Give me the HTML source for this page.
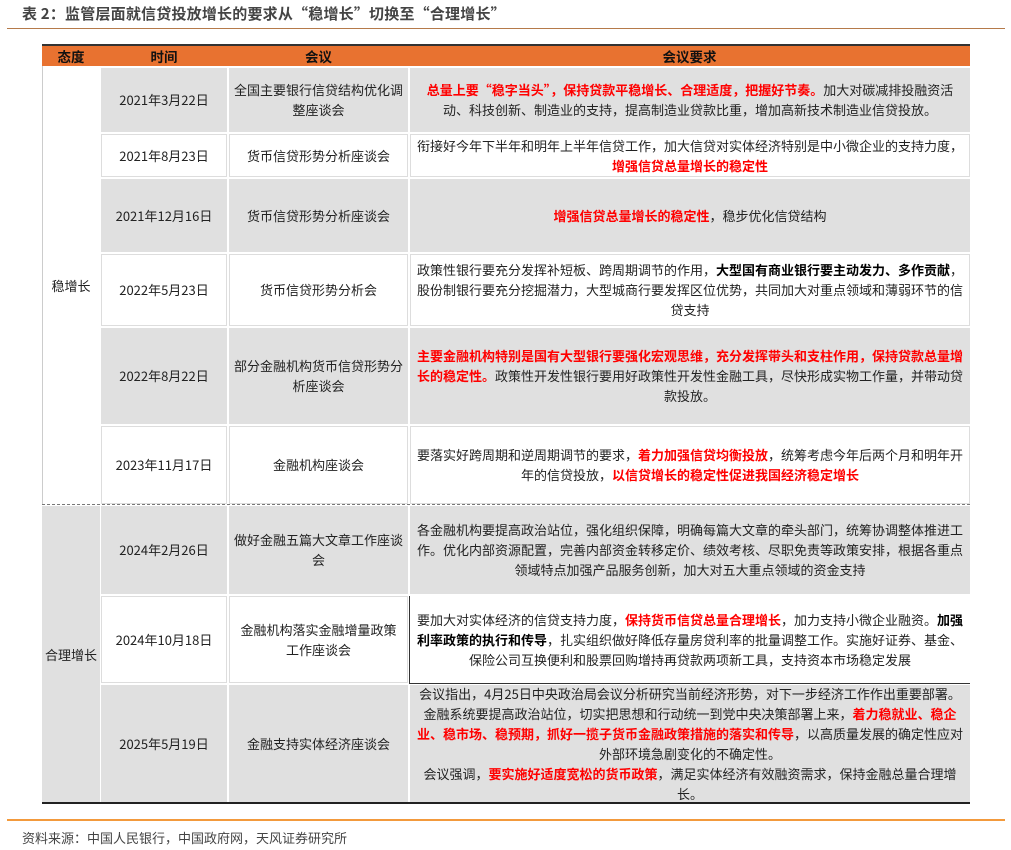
<!DOCTYPE html>
<html><head><meta charset="utf-8"><style>
*{margin:0;padding:0;box-sizing:border-box}
body{width:1011px;height:850px;background:#fff;position:relative;font-family:"Noto Sans CJK SC","Liberation Sans",sans-serif;color:#222;overflow:hidden}
.t{position:absolute;left:22px;top:3px;font-size:15px;line-height:22px;font-weight:bold;color:#444;letter-spacing:0.2px}
.hl{position:absolute;left:7px;top:28px;width:998px;height:1px;background:#b57a4a}
.c{position:absolute;display:flex;align-items:center;justify-content:center;text-align:center;font-size:13px;line-height:20px;padding:0 5px}
.g{background:#e0e0e0}
.w{background:#fff}
.h{background:#e87230;font-weight:bold;color:#111;font-size:13.5px}
.r{color:#f00;font-weight:bold}
.b{font-weight:bold;color:#000}
.fl{position:absolute;left:7px;top:819px;width:998px;height:2px;background:#f39a3c}
.src{position:absolute;left:22px;top:828px;font-size:13px;line-height:20px;color:#444}
</style></head><body>
<div class="t">表 2：监管层面就信贷投放增长的要求从“稳增长”切换至“合理增长”</div>
<div class="hl"></div>
<div style="position:absolute;left:42px;top:44px;width:928px;height:2px;background:#333"></div>
<div class="c h" style="left:42px;top:46px;width:58px;height:20px">态度</div>
<div class="c h" style="left:100px;top:46px;width:128px;height:20px">时间</div>
<div class="c h" style="left:228px;top:46px;width:181px;height:20px">会议</div>
<div class="c h" style="left:409px;top:46px;width:561px;height:20px">会议要求</div>
<div style="position:absolute;left:42px;top:66px;width:928px;height:2px;background:#fff"></div>
<div style="position:absolute;left:42px;top:66px;width:1px;height:438px;background:#ccc"></div>
<div class="c w" style="left:43px;top:68px;width:56px;height:436px;padding:0">稳增长</div>
<div class="c g" style="left:42px;top:506px;width:58px;height:297px;padding:0">合理增长</div>
<div style="position:absolute;left:42px;top:504px;width:928px;height:0;border-top:1px dashed #777"></div>

<div class="c g" style="left:101px;top:68px;width:126px;height:64px">2021年3月22日</div>
<div class="c g" style="left:229px;top:68px;width:179px;height:64px">全国主要银行信贷结构优化调整座谈会</div>
<div class="c g" style="left:410px;top:68px;width:560px;height:64px"><div><span class="r">总量上要“稳字当头”，保持贷款平稳增长、合理适度，把握好节奏。</span>加大对碳减排投融资活动、科技创新、制造业的支持，提高制造业贷款比重，增加高新技术制造业信贷投放。</div></div>

<div class="c w" style="left:101px;top:134px;width:126px;height:43px;border:1px solid #ddd">2021年8月23日</div>
<div class="c w" style="left:229px;top:134px;width:179px;height:43px;border:1px solid #ddd">货币信贷形势分析座谈会</div>
<div class="c w" style="left:410px;top:134px;width:560px;height:43px;border:1px solid #ddd"><div>衔接好今年下半年和明年上半年信贷工作，加大信贷对实体经济特别是中小微企业的支持力度，<span class="r">增强信贷总量增长的稳定性</span></div></div>

<div class="c g" style="left:101px;top:179px;width:126px;height:73px">2021年12月16日</div>
<div class="c g" style="left:229px;top:179px;width:179px;height:73px">货币信贷形势分析座谈会</div>
<div class="c g" style="left:410px;top:179px;width:560px;height:73px"><div><span class="r">增强信贷总量增长的稳定性</span>，稳步优化信贷结构</div></div>

<div class="c w" style="left:101px;top:254px;width:126px;height:72px;border:1px solid #ddd">2022年5月23日</div>
<div class="c w" style="left:229px;top:254px;width:179px;height:72px;border:1px solid #ddd">货币信贷形势分析会</div>
<div class="c w" style="left:410px;top:254px;width:560px;height:72px;border:1px solid #ddd"><div>政策性银行要充分发挥补短板、跨周期调节的作用，<span class="b">大型国有商业银行要主动发力、多作贡献</span>，股份制银行要充分挖掘潜力，大型城商行要发挥区位优势，共同加大对重点领域和薄弱环节的信贷支持</div></div>

<div class="c g" style="left:101px;top:328px;width:126px;height:96px">2022年8月22日</div>
<div class="c g" style="left:229px;top:328px;width:179px;height:96px">部分金融机构货币信贷形势分析座谈会</div>
<div class="c g" style="left:410px;top:328px;width:560px;height:96px"><div><span class="r">主要金融机构特别是国有大型银行要强化宏观思维，充分发挥带头和支柱作用，保持贷款总量增长的稳定性。</span>政策性开发性银行要用好政策性开发性金融工具，尽快形成实物工作量，并带动贷款投放。</div></div>

<div class="c w" style="left:101px;top:426px;width:126px;height:78px;border:1px solid #ddd">2023年11月17日</div>
<div class="c w" style="left:229px;top:426px;width:179px;height:78px;border:1px solid #ddd">金融机构座谈会</div>
<div class="c w" style="left:410px;top:426px;width:560px;height:78px;border:1px solid #ddd"><div>要落实好跨周期和逆周期调节的要求，<span class="r">着力加强信贷均衡投放</span>，统筹考虑今年后两个月和明年开年的信贷投放，<span class="r">以信贷增长的稳定性促进我国经济稳定增长</span></div></div>

<div class="c g" style="left:101px;top:506px;width:126px;height:88px">2024年2月26日</div>
<div class="c g" style="left:229px;top:506px;width:179px;height:88px">做好金融五篇大文章工作座谈会</div>
<div class="c g" style="left:410px;top:506px;width:560px;height:88px"><div>各金融机构要提高政治站位，强化组织保障，明确每篇大文章的牵头部门，统筹协调整体推进工作。优化内部资源配置，完善内部资金转移定价、绩效考核、尽职免责等政策安排，根据各重点领域特点加强产品服务创新，加大对五大重点领域的资金支持</div></div>

<div class="c w" style="left:101px;top:596px;width:126px;height:87px;border:1px solid #ddd">2024年10月18日</div>
<div class="c w" style="left:229px;top:596px;width:179px;height:87px;border:1px solid #ddd">金融机构落实金融增量政策工作座谈会</div>
<div class="c w" style="left:409px;top:596px;width:561px;height:88px;border-left:1px solid #333;border-bottom:1px solid #333"><div>要加大对实体经济的信贷支持力度，<span class="r">保持货币信贷总量合理增长</span>，加力支持小微企业融资。<span class="b">加强利率政策的执行和传导</span>，扎实组织做好降低存量房贷利率的批量调整工作。实施好证券、基金、保险公司互换便利和股票回购增持再贷款两项新工具，支持资本市场稳定发展</div></div>

<div class="c g" style="left:101px;top:685px;width:126px;height:118px">2025年5月19日</div>
<div class="c g" style="left:229px;top:685px;width:179px;height:118px">金融支持实体经济座谈会</div>
<div class="c g" style="left:410px;top:685px;width:560px;height:118px"><div>会议指出，4月25日中央政治局会议分析研究当前经济形势，对下一步经济工作作出重要部署。金融系统要提高政治站位，切实把思想和行动统一到党中央决策部署上来，<span class="r">着力稳就业、稳企业、稳市场、稳预期，抓好一揽子货币金融政策措施的落实和传导</span>，以高质量发展的确定性应对外部环境急剧变化的不确定性。<br>会议强调，<span class="r">要实施好适度宽松的货币政策</span>，满足实体经济有效融资需求，保持金融总量合理增长。</div></div>
<div style="position:absolute;left:42px;top:802px;width:928px;height:2px;background:#222"></div>

<div class="fl"></div>
<div class="src">资料来源：中国人民银行，中国政府网，天风证券研究所</div>
</body></html>
